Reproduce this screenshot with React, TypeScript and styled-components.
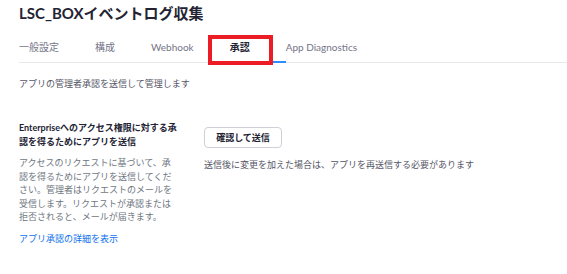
import * as React from 'react';
import styled, {createGlobalStyle} from 'styled-components';

const GlobalStyle = createGlobalStyle`
    body {
        margin: 0;
        background: #fff;
        font-family: Lato, "Noto Sans CJK JP", sans-serif;
    }
`;

const Page = styled.div`
    position: relative;
    padding: 3px 0 0 19px;
    width: 548px;
    height: 271px;
    overflow: hidden;
`;

const Title = styled.h1`
    margin: 0;
    font-size: 15px;
    line-height: 20px;
    font-weight: 700;
    color: #232333;
`;

const TabBar = styled.div`
    display: flex;
    margin-top: 17px;
    border-bottom: 1px solid #e8e8ec;
`;

const Tab = styled.div<{$active?: boolean}>`
    padding: 0 36px 6px 0;
    font-size: 10px;
    line-height: 15px;
    color: ${p => p.$active ? '#232333' : '#747487'};
    font-weight: ${p => p.$active ? 700 : 400};
    border-bottom: 2px solid ${p => p.$active ? '#2d8cff' : 'transparent'};
    margin-bottom: -1px;
`;

const Intro = styled.p`
    margin: 14px 0 0;
    font-size: 9px;
    line-height: 14px;
    color: #555566;
`;

const Section = styled.div`
    display: flex;
    gap: 25px;
    margin-top: 30px;
`;

const LeftCol = styled.div`
    width: 160px;
    flex-shrink: 0;
`;

const Heading = styled.h3`
    margin: 0;
    font-size: 9px;
    line-height: 14px;
    font-weight: 700;
    color: #232333;
`;

const Help = styled.p`
    margin: 7px 0 0;
    width: 156px;
    font-size: 9px;
    line-height: 13.5px;
    color: #6e7680;
`;

const Link = styled.a`
    display: block;
    margin-top: 8px;
    font-size: 9px;
    line-height: 14px;
    color: #0e72ed;
    text-decoration: none;
`;

const RightCol = styled.div`
    padding-top: 4px;
`;

const Button = styled.button`
    width: 78px;
    height: 21px;
    padding: 0;
    border: 1px solid #cfcfd9;
    border-radius: 4px;
    background: #fff;
    font-family: inherit;
    font-size: 9px;
    font-weight: 700;
    color: #232333;
`;

const Note = styled.p`
    margin: 10px 0 0;
    font-size: 9px;
    line-height: 14px;
    color: #555566;
`;

const Highlight = styled.div`
    position: absolute;
    left: 208px;
    top: 35px;
    width: 57px;
    height: 22px;
    border: 4px solid #ec1c24;
`;

const tabs = ['一般設定', '構成', 'Webhook', '承認', 'App Diagnostics'];

const App: React.FC = () => {
    return <Page>
        <GlobalStyle />
        <Title>LSC_BOXイベントログ収集</Title>
        <TabBar>
            {tabs.map(t => <Tab key={t} $active={t === '承認'}>{t}</Tab>)}
        </TabBar>
        <Intro>アプリの管理者承認を送信して管理します</Intro>
        <Section>
            <LeftCol>
                <Heading>Enterpriseへのアクセス権限に対する承認を得るためにアプリを送信</Heading>
                <Help>アクセスのリクエストに基づいて、承認を得るためにアプリを送信してください。管理者はリクエストのメールを受信します。リクエストが承認または拒否されると、メールが届きます。</Help>
                <Link href="#">アプリ承認の詳細を表示</Link>
            </LeftCol>
            <RightCol>
                <Button>確認して送信</Button>
                <Note>送信後に変更を加えた場合は、アプリを再送信する必要があります</Note>
            </RightCol>
        </Section>
        <Highlight />
    </Page>
}

export default App;
